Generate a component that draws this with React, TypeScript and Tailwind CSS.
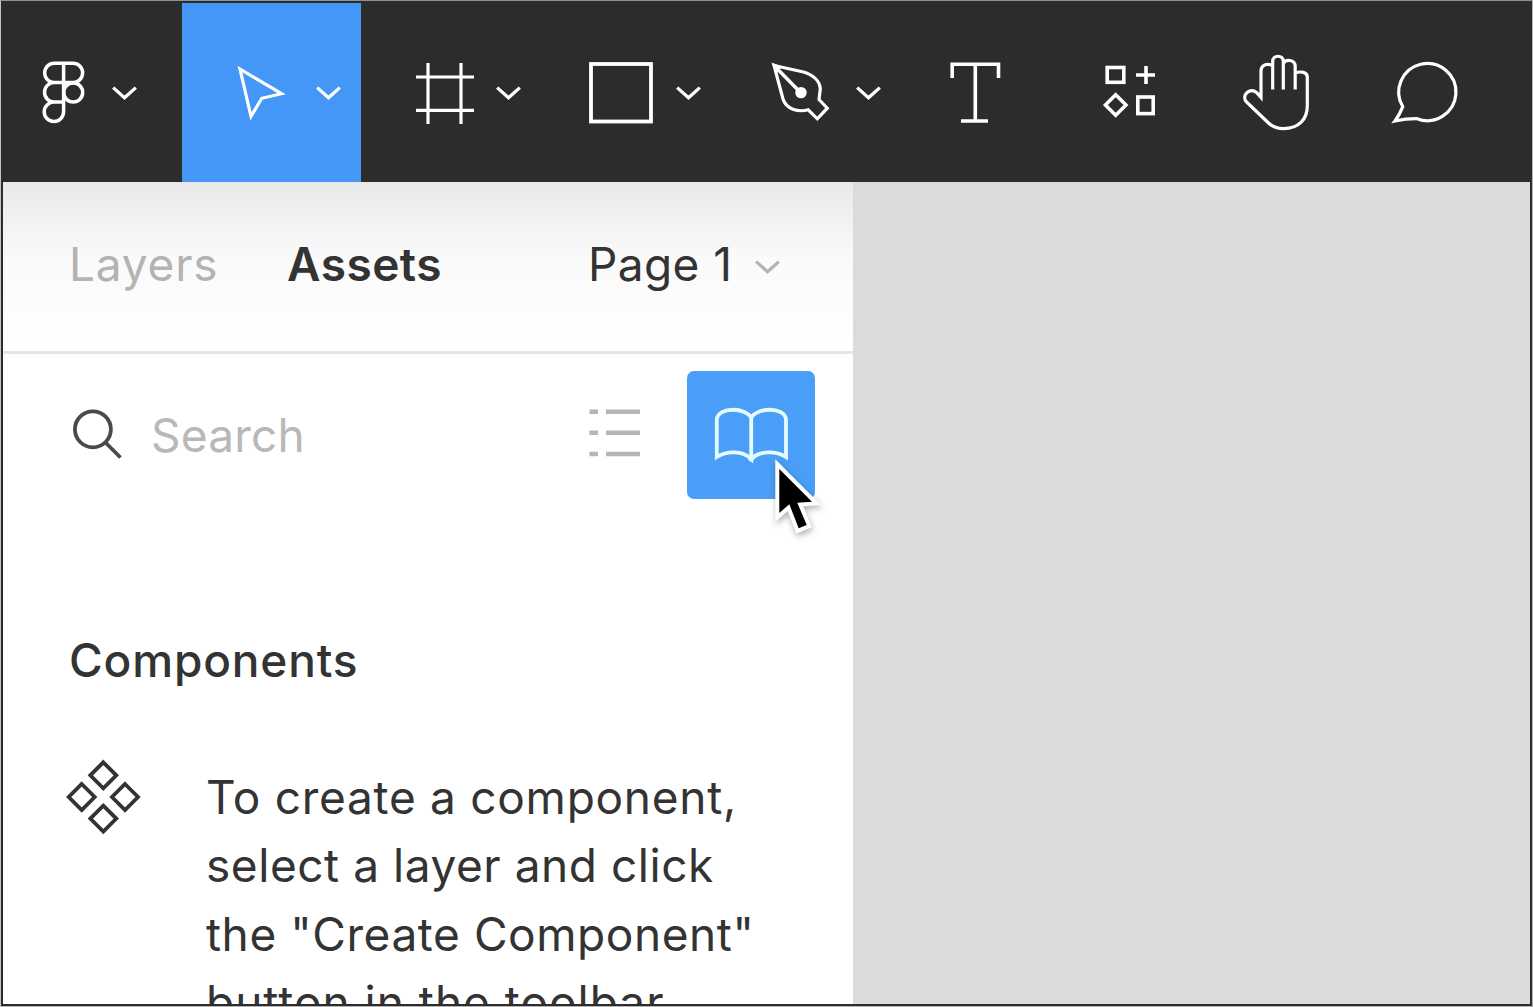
import type { ReactNode } from "react";

function Chevron({ className = "" }: { className?: string }) {
  return (
    <svg className={"shrink-0 " + className} width="27" height="17" viewBox="0 0 27 17" fill="none" stroke="currentColor" strokeWidth="3.3">
      <path d="M2.2 3.6 L13.5 13.8 L24.8 3.6" />
    </svg>
  );
}

function Glyph({ box, children }: { box: string; children: ReactNode }) {
  return (
    <svg className="h-[79px] w-auto shrink-0" viewBox={box} fill="none" stroke="currentColor" strokeWidth="3.2">
      {children}
    </svg>
  );
}

function Toolbar() {
  return (
    <header className="flex h-[179px] shrink-0 bg-[#2c2c2c] text-white">
      <button className="flex w-[179px] items-center pl-[37px]">
        <Glyph box="40 53 50 79">
          <path strokeWidth="3.5" d="M63.5 63.3H54.3a9.6 9.6 0 0 0 0 19.2H63.5M63.5 63.3H73a9.6 9.6 0 0 1 0 19.2H63.5M63.5 82.5H54.3a9.8 9.8 0 0 0 0 19.6H63.5M54.3 102.1a9.7 9.7 0 1 0 9.3 9.7V63.3" />
          <circle cx="73.2" cy="92.5" r="9.5" strokeWidth="3.5" />
        </Glyph>
        <Chevron className="ml-[21px]" />
      </button>
      <button className="flex w-[179px] items-center bg-[#4597f7] pl-[48px]">
        <Glyph box="230 53 60 79">
          <path d="M240 69L281.5 93.7L261.8 98.3L251 116.3Z" />
        </Glyph>
        <Chevron className="ml-[25px]" />
      </button>
      <button className="flex w-[180px] items-center pl-[49px]">
        <Glyph box="410 53 70 79">
          <path d="M428 63V124M461 63V124M416 77H474M416 110.3H474" />
        </Glyph>
        <Chevron className="ml-[15px]" />
      </button>
      <button className="flex w-[180px] items-center pl-[39px]">
        <Glyph box="580 53 80 79">
          <rect x="591" y="64" width="60" height="57.5" strokeWidth="3.8" />
        </Glyph>
        <Chevron className="ml-[15px]" />
      </button>
      <button className="flex w-[180px] items-center pl-[44px]">
        <Glyph box="765 53 70 79">
          <path d="M774 65.5L803.5 72C813 75 820 81 820.3 89L819 99.5L827.3 108.2L817.3 118.8L808.2 109.8C798 112.5 786 109 783 99Z" />
          <path d="M774 65.5L800 92" strokeWidth="3.4" />
          <path d="M771.5 62.5L782 66.5L777 73Z" fill="currentColor" stroke="none" />
          <circle cx="801" cy="92.6" r="5.7" fill="currentColor" stroke="none" />
        </Glyph>
        <Chevron className="ml-[20px]" />
      </button>
      <button className="flex w-[150px] items-center pl-[39px]">
        <Glyph box="940 53 70 79">
          <path d="M952.2 78V64.2H998.5V78M975.3 64V121M961 121H988" strokeWidth="3.6" />
        </Glyph>
      </button>
      <button className="flex w-[150px] items-center pl-[44px]">
        <Glyph box="1095 53 70 79">
          <rect x="1107.2" y="67.5" width="16.6" height="14.8" strokeWidth="3.6" />
          <path d="M1146 66V84M1136 75H1155" strokeWidth="3.6" />
          <path d="M1115.7 94.7L1126 105L1115.7 115.3L1105.4 105Z" strokeWidth="3.5" />
          <rect x="1137.8" y="97" width="15.4" height="16.6" strokeWidth="3.6" />
        </Glyph>
      </button>
      <button className="flex w-[150px] items-center pl-[34px]">
        <Glyph box="1235 53 80 79">
          <path d="M1272.7 89.5V61.5C1272.7 54.5 1283.3 54.5 1283.3 61.5V89.5M1272.7 65.5C1266 62.5 1261 65.5 1261 71V97.5L1256.5 92.5C1250 87 1241.5 95 1246 101.5L1268 122.5C1272 126.5 1276 128.6 1283.5 128.6C1299 128.6 1307.3 119 1307.3 106V77C1307.3 72 1301 71 1295.2 73M1283.3 63.5C1286 58.5 1295.2 59.5 1295.2 66.5V89.5" />
        </Glyph>
      </button>
      <button className="flex flex-1 items-center pl-[34px]">
        <Glyph box="1385 53 80 79">
          <path d="M1402.8 106.7A28.6 28.6 0 1 1 1417 118.7Q1406 118.6 1395 121Q1399.7 114.7 1402.8 106.7Z" />
        </Glyph>
      </button>
    </header>
  );
}

function PanelHeader() {
  return (
    <div className="flex h-[172px] shrink-0 items-center border-b-[3px] border-[#e5e5e5] bg-linear-to-b from-[#e9e9e9] via-[#fafafa] via-45% to-white pb-[4px] pl-[66px]">
      <span className="w-[218px] tracking-[0.8px] text-[#b3b3b3]">Layers</span>
      <span className="w-[301px] font-semibold tracking-[0.5px]">Assets</span>
      <span className="w-[166px] tracking-[0.4px]">Page 1</span>
      <Chevron className="mt-[4px] text-[#b3b3b3]" />
    </div>
  );
}

function BookButton() {
  return (
    <button className="relative flex h-[128px] w-[128px] shrink-0 items-center justify-center rounded-[7px] bg-[#4a9ef7]">
      <svg className="text-[#e4fbff]" width="76" height="56" viewBox="713 406.5 76 56" fill="none" stroke="currentColor" strokeWidth="3.8">
        <path d="M751.2 417.5C747 407 718 405.500 716.8 419V456.5C727 450 743 450 751.2 458.5V417.500C755.500 407 784.800 405.500 786 419V456.5C776 450 760 450 751.2 458.5" />
        <circle cx="751.2" cy="458" r="3" fill="currentColor" stroke="none" />
      </svg>
      <svg
        className="absolute top-[82px] left-[78px] drop-shadow-[1px_3px_3px_rgba(0,0,0,0.3)]"
        width="60"
        height="90"
        viewBox="765 453 60 90"
      >
        <path
          d="M779.3 469L779.3 513L789.3 504.3L798.7 528.3L806.7 525L797.3 502.7L812 501.7Z"
          fill="black"
          stroke="white"
          strokeWidth="8"
          paintOrder="stroke"
        />
      </svg>
    </button>
  );
}

function SearchRow() {
  return (
    <div className="flex h-[162px] shrink-0 items-center pl-[66px]">
      <svg className="mb-[3px] shrink-0 text-[#4a4a4a]" width="56" height="56" viewBox="69 405 56 56" fill="none" stroke="currentColor" strokeWidth="3.8">
        <circle cx="92.9" cy="428.3" r="18" />
        <path d="M105.5 441.5L120.5 456.5" />
      </svg>
      <span className="ml-[26px] w-[438px] tracking-[0.2px] text-[#b8b8b8]">Search</span>
      <svg className="mb-[4px] shrink-0 text-[#b5b5b5]" width="52" height="50" viewBox="589 408 52 50" stroke="currentColor" strokeWidth="4.4">
        <path d="M589.5 411.7H598M606 411.7H640M589.5 432.8H598M606 432.8H640M589.5 454H598M606 454H640" />
      </svg>
      <div className="ml-[46px]">
        <BookButton />
      </div>
    </div>
  );
}

function ComponentsIcon() {
  return (
    <svg className="mt-[17px] shrink-0" width="78" height="78" viewBox="64 757.7 78 78" fill="none" stroke="currentColor" strokeWidth="3.8">
      <path d="M103.3 762L116.3 775L103.3 788L90.3 775Z" />
      <path d="M81.7 783.7L94.7 796.7L81.7 809.7L68.7 796.7Z" />
      <path d="M125 783.7L138 796.7L125 809.7L112 796.7Z" />
      <path d="M103.3 805.3L116.3 818.3L103.3 831.3L90.3 818.3Z" />
    </svg>
  );
}

export default function App() {
  return (
    <div className="h-[1007px] w-[1533px] overflow-hidden border border-t-[#8d918f] border-r-[#b5b5b5] border-b-[#b5b5b5] border-l-[#c4c4c4] font-['Inter',sans-serif]">
      <div className="flex h-full flex-col overflow-hidden border-2 border-[#2c2c2c]">
        <Toolbar />
        <main className="flex min-h-0 flex-1 bg-[#dadbdd]">
          <aside className="flex w-[850px] shrink-0 flex-col overflow-hidden bg-white text-[46px] leading-[68.5px] whitespace-nowrap text-[#333]">
            <PanelHeader />
            <SearchRow />
            <h2 className="mt-[110px] shrink-0 pl-[66px] font-medium tracking-[0.85px]">Components</h2>
            <div className="mt-[46px] flex shrink-0 items-start pl-[61px]">
              <ComponentsIcon />
              <p className="mt-[22px] ml-[64px]">
                <span className="tracking-[0.72px]">To create a component,</span>
                <br />
                <span className="tracking-[0.55px]">select a layer and click</span>
                <br />
                <span className="tracking-[0.57px]">the "Create Component"</span>
                <br />
                <span className="tracking-[1px]">button in the toolbar</span>
              </p>
            </div>
          </aside>
        </main>
      </div>
    </div>
  );
}
